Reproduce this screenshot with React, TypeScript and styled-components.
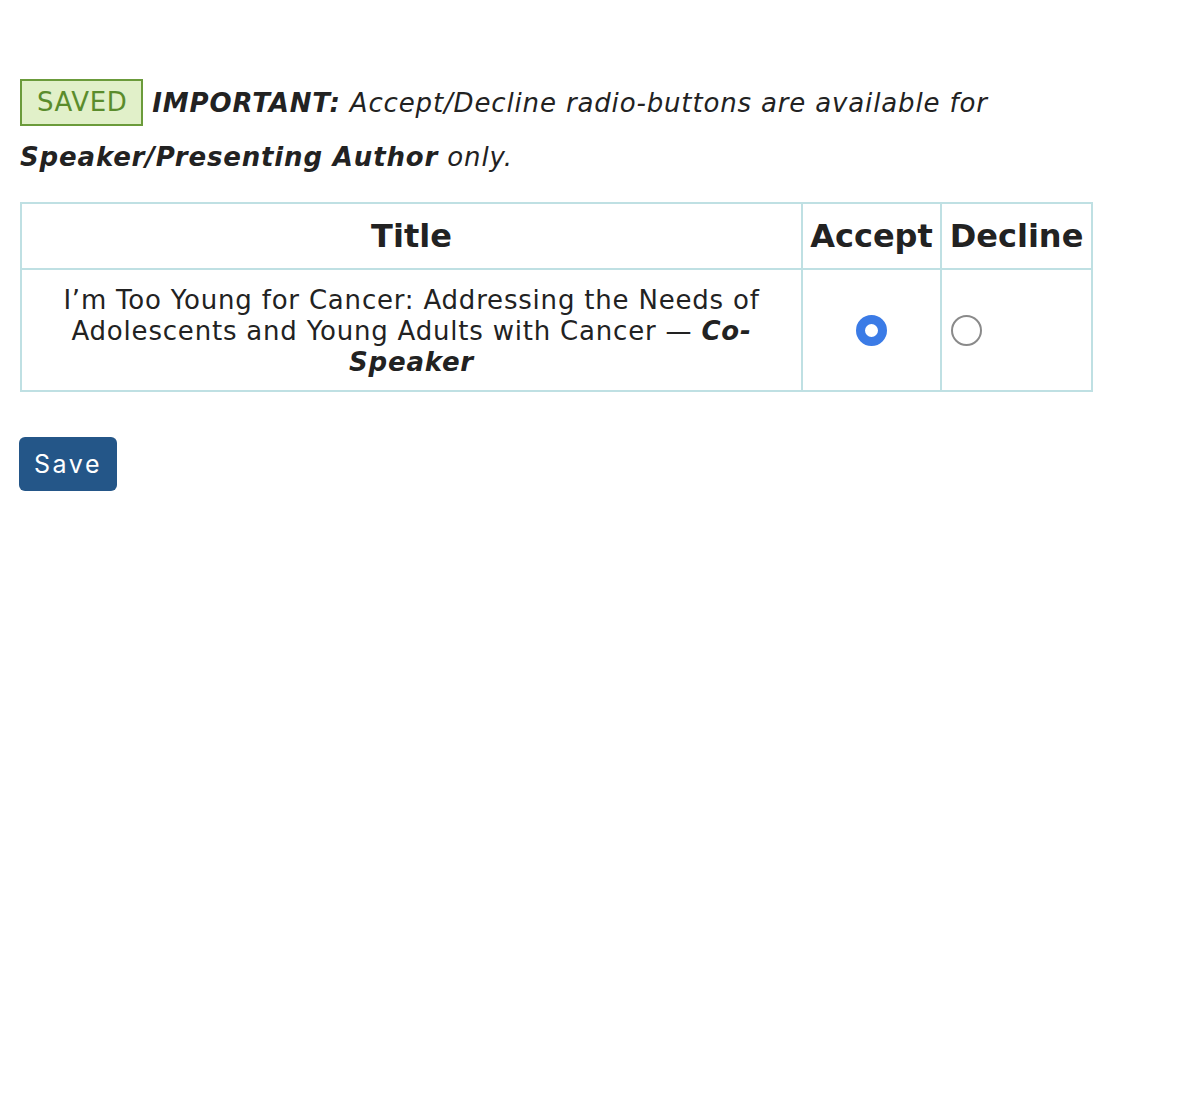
import React, { useState } from 'react';
import styled, { createGlobalStyle } from 'styled-components';

const GlobalStyle = createGlobalStyle`
    body {
        margin: 0;
        background: #ffffff;
        font-family: "DejaVu Sans", Verdana, sans-serif;
        color: #222222;
    }
`;

const Page = styled.div`
    padding: 76px 20px 0 20px;
    width: 1072px;
`;

const Notice = styled.p`
    margin: 0;
    font-size: 26px;
    line-height: 54px;
    font-style: italic;
    letter-spacing: 0.85px;
    color: #222222;
`;

const SavedBadge = styled.span`
    display: inline-block;
    font-style: normal;
    font-size: 26px;
    line-height: 43px;
    letter-spacing: 0.6px;
    padding: 0 14px 0 15px;
    margin-right: 9px;
    margin-top: 3px;
    background: #e1f0c9;
    color: #5a8c2c;
    border: 2px solid #6b9b3b;
    vertical-align: top;
`;

const Table = styled.table`
    margin-top: 18px;
    width: 1071px;
    table-layout: fixed;
    border-collapse: collapse;
    border: 2px solid #bfe0e3;
`;

const HeadCell = styled.th`
    border: 2px solid #bfe0e3;
    font-size: 32px;
    font-weight: bold;
    padding: 14px 4px;
    line-height: 36px;
    text-align: center;
    white-space: nowrap;
`;

const BodyCell = styled.td<{ $align?: string }>`
    border: 2px solid #bfe0e3;
    font-size: 26px;
    line-height: 31px;
    letter-spacing: 0.8px;
    padding: 15px 20px 12px 20px;
    text-align: ${p => p.$align || 'center'};
    vertical-align: middle;
`;

const RadioCell = styled(BodyCell)`
    padding: 12px 9px;
`;

const Role = styled.strong`
    font-style: italic;
`;

const Radio = styled.span<{ $checked: boolean }>`
    display: inline-block;
    box-sizing: border-box;
    width: 31px;
    height: 31px;
    border-radius: 50%;
    vertical-align: middle;
    cursor: pointer;
    border: ${p => (p.$checked ? '9px solid #3b7be6' : '2.5px solid #8a8a8a')};
    background: #ffffff;
`;

const SaveButton = styled.button`
    margin-top: 45px;
    margin-left: -1px;
    display: block;
    background: #245688;
    color: #ffffff;
    border: none;
    border-radius: 6px;
    font-family: Inter, "Noto Sans", sans-serif;
    font-size: 25px;
    letter-spacing: 2.6px;
    padding: 0;
    height: 54px;
    width: 98px;
    cursor: pointer;
`;

const App: React.FC = () => {
    const [choice, setChoice] = useState<'accept' | 'decline'>('accept');

    return (
        <>
            <GlobalStyle />
            <Page>
                <Notice>
                    <SavedBadge>SAVED</SavedBadge>
                    <strong>IMPORTANT:</strong> Accept/Decline radio-buttons are available for{' '}
                    <strong>Speaker/Presenting Author</strong> only.
                </Notice>
                <Table>
                    <colgroup>
                        <col style={{ width: 781 }} />
                        <col style={{ width: 139 }} />
                        <col style={{ width: 151 }} />
                    </colgroup>
                    <thead>
                        <tr>
                            <HeadCell>Title</HeadCell>
                            <HeadCell>Accept</HeadCell>
                            <HeadCell>Decline</HeadCell>
                        </tr>
                    </thead>
                    <tbody>
                        <tr>
                            <BodyCell>
                                I’m Too Young for Cancer: Addressing the Needs of Adolescents and Young
                                Adults with Cancer — <Role>Co-Speaker</Role>
                            </BodyCell>
                            <RadioCell>
                                <Radio $checked={choice === 'accept'} onClick={() => setChoice('accept')} />
                            </RadioCell>
                            <RadioCell $align="left">
                                <Radio $checked={choice === 'decline'} onClick={() => setChoice('decline')} />
                            </RadioCell>
                        </tr>
                    </tbody>
                </Table>
                <SaveButton>Save</SaveButton>
            </Page>
        </>
    );
};

export default App;
